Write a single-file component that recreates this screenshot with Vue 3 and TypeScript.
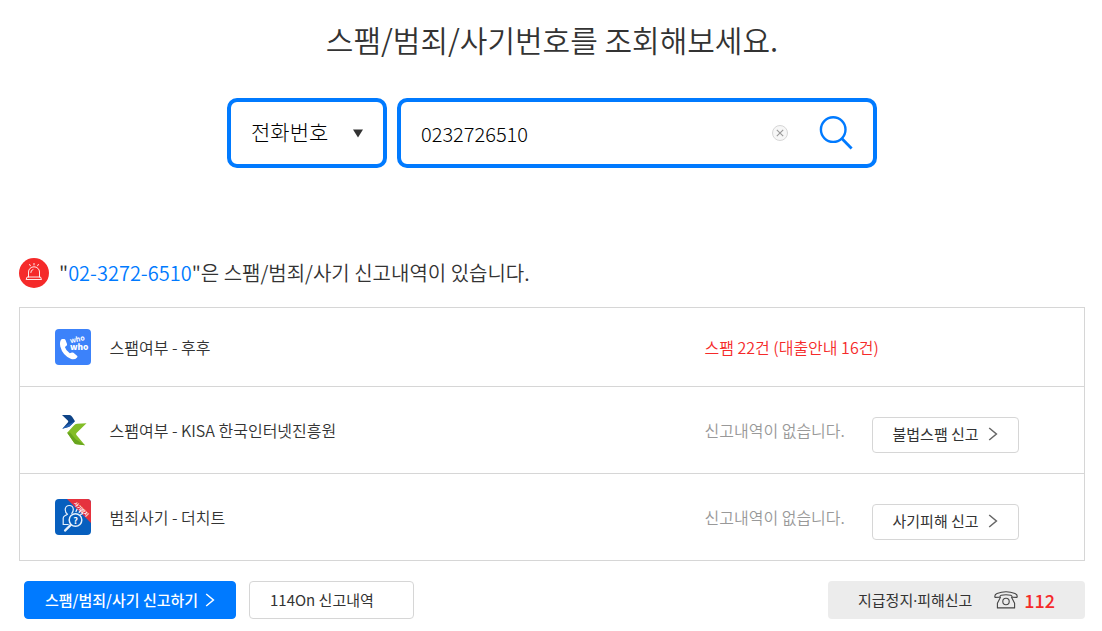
<script setup lang="ts">
import { ref } from 'vue'

interface Report {
  id: 'whowho' | 'kisa' | 'cheat'
  name: string
  status: string
  found: boolean
  action?: string
}

const kind = ref('phone')
const query = ref('0232726510')
const shownNumber = '02-3272-6510'

const reports: Report[] = [
  { id: 'whowho', name: '스팸여부 - 후후', status: '스팸 22건 (대출안내 16건)', found: true },
  { id: 'kisa', name: '스팸여부 - KISA 한국인터넷진흥원', status: '신고내역이 없습니다.', found: false, action: '불법스팸 신고' },
  { id: 'cheat', name: '범죄사기 - 더치트', status: '신고내역이 없습니다.', found: false, action: '사기피해 신고' },
]
</script>

<template>
  <main class="page">
    <h1 class="title">스팸/범죄/사기번호를 조회해보세요.</h1>

    <form class="search" @submit.prevent>
      <div class="kind">
        <select v-model="kind" aria-label="조회 유형">
          <option value="phone">전화번호</option>
        </select>
        <svg class="caret" viewBox="0 0 10 9" aria-hidden="true"><path d="M0 0.5H10L5 8.5Z" fill="#333" /></svg>
      </div>
      <div class="field">
        <input v-model="query" type="text" aria-label="조회할 번호" />
        <button class="clear" type="button" aria-label="지우기" @click="query = ''">
          <svg viewBox="0 0 16 16"><circle cx="8" cy="8" r="7.5" fill="#f7f7f7" stroke="#d6d6d6" /><path d="M4.8 4.8L11.2 11.2M11.2 4.8L4.8 11.2" stroke="#999" stroke-width="1.1" /></svg>
        </button>
        <button class="go" type="submit" aria-label="조회">
          <svg viewBox="0 0 34 34" fill="none" stroke="#007aff"><circle cx="14.2" cy="13.6" r="12.3" stroke-width="2.4" /><path d="M22.8 22.4L32.6 32.4" stroke-width="2.8" /></svg>
        </button>
      </div>
    </form>

    <h2 class="result">
      <svg class="siren" viewBox="0 0 30 30" fill="none" stroke="#fff" stroke-linecap="round" stroke-linejoin="round" aria-hidden="true">
        <circle cx="15" cy="15" r="15" fill="#f52a2a" stroke="none" />
        <path d="M9.5 19V14A5.5 5.2 0 0 1 20.5 14V19M8.5 19H21.5L22.5 21.5H7.5ZM11.8 14.5A3.2 3 0 0 1 14 11.5M15 5.4V7M10.6 6.4L11.4 7.8M19.4 6.4L18.6 7.8" stroke-width="0.9" />
      </svg>
      <span>"<em>{{ shownNumber }}</em>"은 스팸/범죄/사기 신고내역이 있습니다.</span>
    </h2>

    <table class="reports">
      <tbody>
        <tr v-for="r in reports" :key="r.id">
          <td class="logo">
            <svg v-if="r.id === 'whowho'" viewBox="0 0 36 36" aria-hidden="true">
              <rect width="36" height="36" rx="4" fill="#3c82fa" />
              <path d="M6.8 10.1L9.2 9.9Q10.1 9.9 10.5 10.9L12 15Q12.3 16.1 11.5 16.8L9.9 18.1Q10.8 21.8 14.8 24.3L16.9 23.5Q17.7 23.2 18.5 23.8L22 26.7Q23 27.6 22.1 28.4Q19.5 31.4 15.7 29.8Q7.6 26.4 5.3 17.6Q4.2 12.3 6.8 10.1Z" fill="#fff" />
              <text x="15.4" y="14.2" font-size="7" font-weight="700" fill="#fff" transform="rotate(-12 15.4 14.2)">who</text>
              <text x="15" y="20.6" font-size="8.4" font-weight="900" fill="#fff">who</text>
            </svg>
            <svg v-else-if="r.id === 'kisa'" viewBox="0 0 36 36" aria-hidden="true">
              <path d="M7 3H14.5Q16 3.2 17.3 5L20 9.2L14.5 14.5Q13.8 15.2 12.5 15.3L7.3 16.8L13 10.2Q13.5 9.4 13 8.8Z" fill="#0e4387" />
              <path d="M20 9.2L14.5 14.5Q13.8 15.2 12.5 15.3L7.3 16.8L12.3 13Z" fill="#2561b5" />
              <path d="M31.5 11.3L22 11.7Q20.2 11.9 18.6 13.7L12.2 20.7L19.2 31Q20 32.2 21.6 32.3L30 33.2L21.4 23Q20.7 22 21.5 21.1Z" fill="#83bd27" />
              <path d="M12.2 20.7L19.2 31Q20 32.2 21.6 32.3L30 33.2L21 27.5L15 20.5Z" fill="#68a51e" />
            </svg>
            <svg v-else viewBox="0 0 36 36" aria-hidden="true">
              <rect width="36" height="36" rx="4" fill="#075fbe" />
              <path d="M12 0H32Q36 0 36 4V24Z" fill="#e5323e" />
              <g fill="none" stroke="#e6f0fb" stroke-width="1.2" stroke-linecap="round">
                <path d="M12.5 15.2Q9.9 13.8 10.3 9.8Q10.9 6.5 14.3 6.5Q18 6.5 18.3 10.2Q18.3 12.8 16.8 14.3M12.5 15.2L9.5 17Q8 17.8 8.2 20V25.5H13.2" />
                <circle cx="20.5" cy="21" r="6.3" stroke-width="1.5" />
                <path d="M15.8 25.9L10 31.6" stroke-width="2.2" />
                <path d="M21 12.5L22 10.3M24.2 13.2L26 11.3M25.8 15.4L27.8 14.5" stroke-width="1.3" />
              </g>
              <text x="20.5" y="24.5" font-size="9" font-weight="700" text-anchor="middle" fill="#fff">?</text>
              <text x="18.6" y="5" font-size="5" font-weight="700" fill="#fff" transform="rotate(45 18.6 5)">사기방지</text>
            </svg>
          </td>
          <th scope="row">{{ r.name }}</th>
          <td class="status" :class="{ found: r.found }">{{ r.status }}</td>
          <td class="action">
            <button v-if="r.action" class="btn small" type="button">
              {{ r.action }}
              <svg class="chevron" viewBox="0 0 10 14" aria-hidden="true"><path d="M1.2 1L8.4 7L1.2 13" /></svg>
            </button>
          </td>
        </tr>
      </tbody>
    </table>

    <footer class="actions">
      <button class="btn primary" type="button">
        스팸/범죄/사기 신고하기
        <svg class="chevron" viewBox="0 0 10 14" aria-hidden="true"><path d="M1.2 1L8.4 7L1.2 13" /></svg>
      </button>
      <button class="btn history" type="button">114On 신고내역</button>
      <p class="police">
        <span>지급정지·피해신고</span>
        <svg viewBox="0 0 24 18" fill="none" stroke="#444" stroke-width="1.1" stroke-linejoin="round" aria-hidden="true">
          <path d="M1 6.4Q0.2 3.6 3 2.4Q12 -0.8 21 2.4Q23.8 3.6 23 6.4L18.3 6.2Q17.8 4.4 16.8 4.2Q12 3.2 7.2 4.2Q6.2 4.4 5.7 6.2Z" />
          <path d="M6.6 6L3.4 12.2V16.9H20.6V12.2L17.4 6" />
          <circle cx="12" cy="10.5" r="3.2" />
        </svg>
        <strong>112</strong>
      </p>
    </footer>
  </main>
</template>

<style>
body {
  margin: 0;
  background: #fff;
}
</style>

<style scoped>
.page,
.page button,
.page input,
.page select {
  font-family: "Noto Sans CJK KR", "Noto Sans", sans-serif;
}
.page {
  box-sizing: border-box;
  padding: 17px 17px 12px 19px;
  color: #333;
  font-size: 16px;
  line-height: 22px;
}
.page * {
  box-sizing: border-box;
}
svg {
  display: block;
  flex: none;
}
button {
  padding: 0;
  border: 0;
  background: none;
  color: inherit;
  cursor: pointer;
}
.title {
  margin: 0;
  font-size: 30px;
  font-weight: 350;
  line-height: 44px;
  text-align: center;
}
.search {
  display: flex;
  justify-content: center;
  gap: 10px;
  margin-top: 37px;
}
.kind,
.field {
  display: flex;
  align-items: center;
  height: 70px;
  border: 4px solid #007aff;
  border-radius: 10px;
}
.kind {
  width: 160px;
  padding: 0 20px;
}
.kind select {
  flex: 1;
  min-width: 0;
  height: 62px;
  padding: 0 0 5px;
  border: 0;
  background: none;
  appearance: none;
  color: #000;
  font-size: 21px;
  font-weight: 300;
  outline: 0;
}
.caret {
  width: 10px;
  height: 9px;
}
.field {
  width: 480px;
  padding: 0 20px;
}
.field input {
  flex: 1;
  min-width: 0;
  height: 62px;
  padding: 0;
  border: 0;
  background: none;
  color: #000;
  font-size: 20px;
  font-weight: 300;
  outline: 0;
}
.clear svg {
  width: 16px;
  height: 16px;
}
.go {
  margin-left: 31px;
}
.go svg {
  width: 34px;
  height: 34px;
}
.result {
  display: flex;
  align-items: center;
  gap: 10px;
  margin: 90px 0 0;
  font-size: 20px;
  font-weight: 350;
  line-height: 30px;
}
.result em {
  color: #007aff;
  font-style: normal;
}
.siren {
  width: 30px;
  height: 30px;
}
.reports {
  width: 100%;
  margin-top: 19px;
  border-collapse: collapse;
  table-layout: fixed;
  border: 1px solid #d6d6d6;
}
.reports tr {
  height: 87px;
  border-top: 1px solid #d6d6d6;
}
.reports tr:first-child {
  height: 79px;
}
.reports td,
.reports th {
  padding: 0;
  font-weight: 350;
  text-align: left;
}
.reports .logo {
  width: 90px;
  padding-left: 35px;
}
.logo svg {
  width: 36px;
  height: 36px;
}
.reports .status {
  width: 167px;
  color: #999;
  white-space: nowrap;
}
.reports .status.found {
  color: #f52a2a;
}
.reports .action {
  width: 213px;
  padding-top: 9px;
}
.btn {
  display: flex;
  align-items: center;
  height: 38px;
  padding: 0 20px 1px;
  border: 1px solid #d6d6d6;
  border-radius: 4px;
  background: #fff;
  color: #333;
  font-size: 15px;
  line-height: 22px;
}
.btn.small {
  width: 147px;
  height: 36px;
  justify-content: space-between;
}
.chevron {
  width: 10px;
  height: 14px;
  fill: none;
  stroke: #666;
  stroke-width: 1.5;
}
.actions {
  display: flex;
  gap: 13px;
  margin: 20px 0 0 5px;
}
.btn.primary {
  width: 212px;
  justify-content: space-between;
  border-color: #007aff;
  background: #007aff;
  color: #fff;
  font-weight: 500;
}
.primary .chevron {
  stroke: #fff;
}
.btn.history {
  width: 165px;
}
.police {
  display: flex;
  align-items: center;
  width: 257px;
  height: 38px;
  margin: 0 0 0 auto;
  padding: 0 30px;
  border-radius: 4px;
  background: #ececec;
}
.police span {
  font-family: "Noto Sans", "Noto Sans CJK KR", sans-serif;
  font-size: 15px;
}
.police svg {
  width: 24px;
  height: 18px;
  margin: 0 6px 0 auto;
}
.police strong {
  color: #f52a2a;
  font-size: 18px;
  font-weight: 500;
}
</style>
